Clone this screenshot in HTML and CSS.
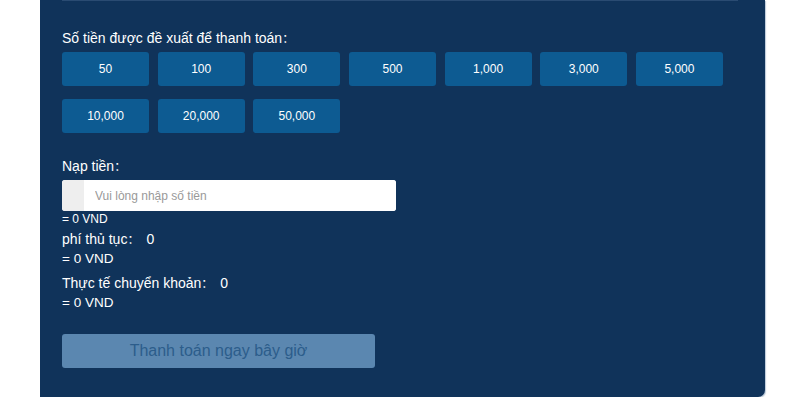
FILE: index.html
```html
<!DOCTYPE html>
<html lang="vi">
<head>
<meta charset="utf-8">
<title>Nạp tiền</title>
<link rel="stylesheet" href="styles.css">
</head>
<body>
<div class="panel">
  <div class="topline"></div>
  <div class="label">Số tiền được đề xuất để thanh toán<span class="colon">：</span></div>
  <div class="amounts">
    <button class="amt">50</button>
    <button class="amt">100</button>
    <button class="amt">300</button>
    <button class="amt">500</button>
    <button class="amt">1,000</button>
    <button class="amt">3,000</button>
    <button class="amt">5,000</button>
    <button class="amt">10,000</button>
    <button class="amt">20,000</button>
    <button class="amt">50,000</button>
  </div>
  <div class="label deposit">Nạp tiền<span class="colon">：</span></div>
  <div class="inputgroup">
    <span class="addon"></span>
    <input class="field" type="text" placeholder="Vui lòng nhập số tiền">
  </div>
  <div class="small">= 0 VND</div>
  <div class="line first">phí thủ tục<span class="colon">：</span><span class="val">0</span></div>
  <div class="line sub">= 0 VND</div>
  <div class="line gap">Thực tế chuyển khoản<span class="colon">：</span><span class="val">0</span></div>
  <div class="line sub">= 0 VND</div>
  <button class="pay" disabled>Thanh toán ngay bây giờ</button>
</div>
</body>
</html>
```
FILE: styles.css
```css
html, body {
  margin: 0;
  padding: 0;
  background: #ffffff;
}
body {
  font-family: "Liberation Sans", Arial, "Noto Sans CJK SC", sans-serif;
  color: #ffffff;
}
.panel {
  margin-left: 40px;
  width: 725px;
  height: 397px;
  box-sizing: border-box;
  padding: 0 22px;
  background: #10335a;
  border-bottom-right-radius: 7px;
  box-shadow: 1px 1px 1px rgba(120, 150, 180, 0.5);
}
.topline {
  height: 1px;
  margin-right: 5px;
  background: #2a4b72;
}
.label {
  font-size: 14px;
  line-height: 16px;
  margin-top: 29px;
  color: #ffffff;
}
.colon {
  font-family: "Noto Sans CJK SC", sans-serif;
  font-size: 12px;
}
.amounts {
  display: flex;
  flex-wrap: wrap;
  column-gap: 8.67px;
  row-gap: 13px;
  margin-top: 6px;
  width: 670px;
}
.amt {
  width: 87px;
  height: 34px;
  border: none;
  border-radius: 3px;
  background: #0d5b92;
  color: #ffffff;
  font-family: "Liberation Sans", Arial, sans-serif;
  font-size: 12px;
  padding: 0;
}
.deposit {
  margin-top: 25px;
}
.inputgroup {
  display: flex;
  margin-top: 6px;
  width: 334px;
  height: 31px;
  background: #ffffff;
  border-radius: 3px;
  overflow: hidden;
}
.addon {
  width: 22px;
  background: #eeeeee;
}
.field {
  flex: 1;
  border: none;
  outline: none;
  padding: 0 0 0 11px;
  font-family: "Liberation Sans", Arial, sans-serif;
  font-size: 12px;
  color: #333333;
  background: #ffffff;
}
.field::placeholder {
  color: #999999;
}
.small {
  font-size: 12px;
  line-height: 17px;
}
.line {
  font-size: 14px;
  line-height: 19px;
}
.line.sub {
  font-size: 13.5px;
}
.line.first {
  margin-top: 1px;
}
.line.gap {
  margin-top: 5px;
}
.val {
  margin-left: 7px;
}
.pay {
  display: block;
  margin-top: 22px;
  width: 313px;
  height: 34px;
  border: none;
  border-radius: 3px;
  background: #5b87b0;
  color: #2c5d8b;
  font-family: "Liberation Sans", Arial, sans-serif;
  font-size: 16px;
  padding: 0;
}
```
